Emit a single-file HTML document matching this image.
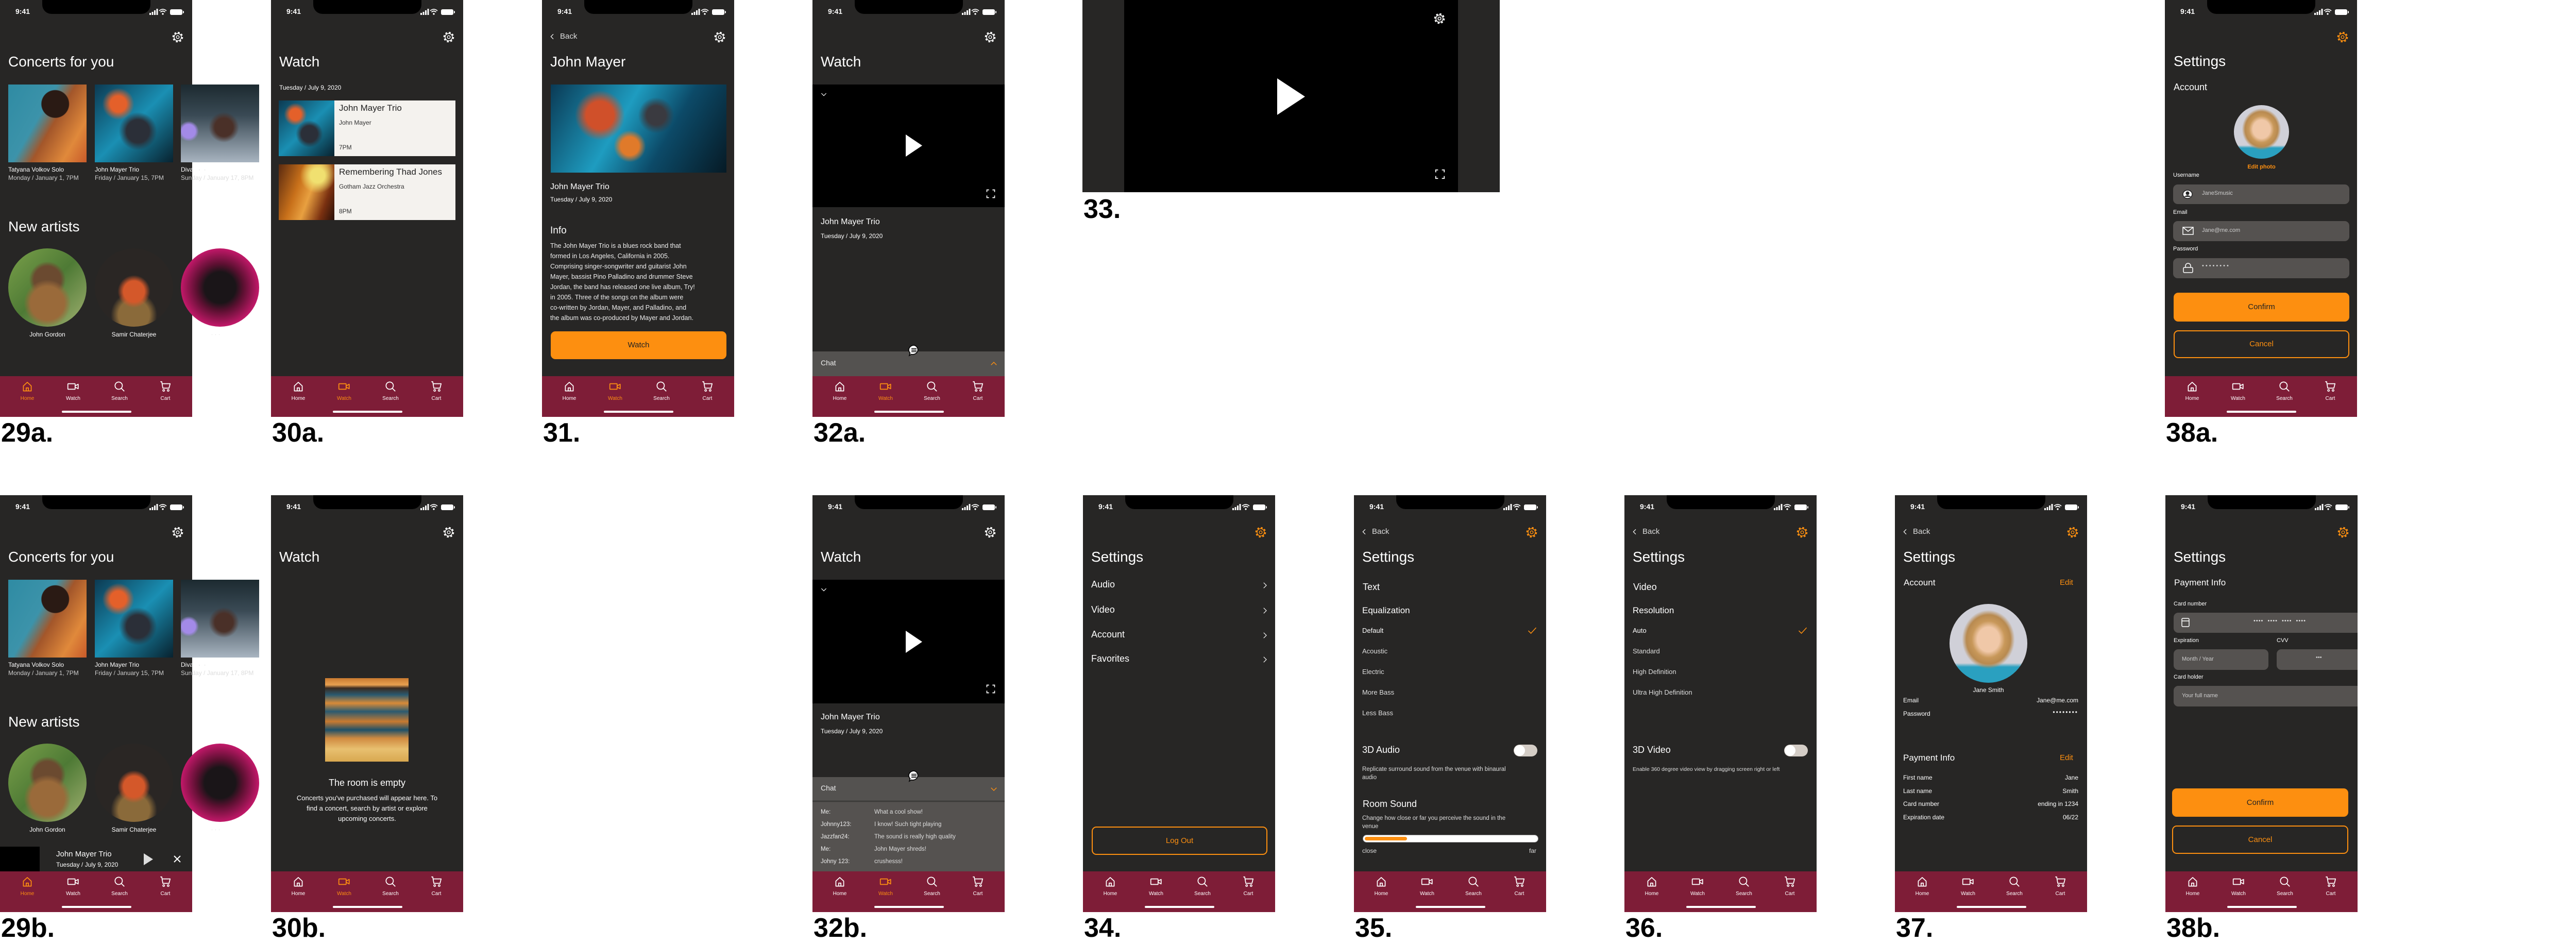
<!DOCTYPE html>
<html><head><meta charset="utf-8"><style>
*{margin:0;padding:0;box-sizing:border-box}
body{width:5102px;height:1822px;background:#fff;position:relative;overflow:hidden;font-family:"Liberation Sans",sans-serif}
.ph{position:absolute;width:373px;height:809px;background:#272625;overflow:hidden}
.ov{overflow:visible}
.t{position:absolute;white-space:nowrap;color:#fff;line-height:1.2}
.tm{position:absolute;left:30px;top:14px;color:#fff;font-weight:bold;font-size:14px}
.notch{position:absolute;left:82px;top:0;width:210px;height:27px;background:#000;border-radius:0 0 18px 18px}
.st{position:absolute;left:290px;top:16px}
.tb{position:absolute;left:0;top:730px;width:373px;height:79px;background:#7e1d37}
.ti{position:absolute;top:7px;width:70px;margin-left:-35px;text-align:center;color:#fff;font-size:10px}
.ti svg{display:block;margin:0 auto;width:26px;height:26px}
.ti span{display:block;margin-top:5px;line-height:12px}
.on{color:#fd8f10}
.hi{position:absolute;left:120px;width:135px;top:67px;height:4px;border-radius:2px;background:#fff}
.lbl{position:absolute;font-weight:bold;font-size:52px;line-height:1;color:#000}
.ic{position:absolute;color:#fff}
.h1{font-size:28px}
.sm{font-size:12px}
.btn{position:absolute;left:17px;width:341px;border-radius:9px;text-align:center;font-size:15px}
.fld{position:absolute;background:#555250;border-radius:9px}
</style></head><body>
<svg style="display:none" xmlns="http://www.w3.org/2000/svg">
<symbol id="home" viewBox="0 0 24 24"><path d="M5 11 L12 4.5 L19 11 V20 H5 Z M10 20 V14.5 H14 V20" fill="none" stroke="currentColor" stroke-width="1.6" stroke-linejoin="round"/></symbol>
<symbol id="vid" viewBox="0 0 24 24"><rect x="2.5" y="7" width="13" height="10" rx="1" fill="none" stroke="currentColor" stroke-width="1.6"/><path d="M15.5 11 L21 8 V16 L15.5 13" fill="none" stroke="currentColor" stroke-width="1.6" stroke-linejoin="round"/></symbol>
<symbol id="srch" viewBox="0 0 24 24"><circle cx="10.5" cy="10.5" r="6.5" fill="none" stroke="currentColor" stroke-width="1.6"/><path d="M15.3 15.3 L20.5 20.5" stroke="currentColor" stroke-width="1.6"/></symbol>
<symbol id="cart" viewBox="0 0 24 24"><path d="M3 3.5 H5.5 L7.5 15 H18.5 L20.5 7 H6.2" fill="none" stroke="currentColor" stroke-width="1.6" stroke-linejoin="round"/><circle cx="9" cy="19" r="1.6" fill="none" stroke="currentColor" stroke-width="1.4"/><circle cx="17" cy="19" r="1.6" fill="none" stroke="currentColor" stroke-width="1.4"/></symbol>
<symbol id="gear" viewBox="0 0 24 24"><circle cx="12" cy="12" r="8.6" fill="none" stroke="currentColor" stroke-width="3.4" stroke-dasharray="3.4 3.35"/><circle cx="12" cy="12" r="7" fill="#272625" stroke="currentColor" stroke-width="1.4"/><circle cx="12" cy="12" r="2.8" fill="none" stroke="currentColor" stroke-width="1.4"/></symbol>
<symbol id="chr" viewBox="0 0 24 24"><path d="M9 5 L16 12 L9 19" fill="none" stroke="currentColor" stroke-width="1.6"/></symbol>
<symbol id="chl" viewBox="0 0 24 24"><path d="M15 5 L8 12 L15 19" fill="none" stroke="currentColor" stroke-width="1.8"/></symbol>
<symbol id="chd" viewBox="0 0 24 24"><path d="M5 9 L12 16 L19 9" fill="none" stroke="currentColor" stroke-width="1.8"/></symbol>
<symbol id="chu" viewBox="0 0 24 24"><path d="M5 15 L12 8 L19 15" fill="none" stroke="currentColor" stroke-width="1.8"/></symbol>
<symbol id="chk" viewBox="0 0 24 24"><path d="M3 12 L9 18 L21 5" fill="none" stroke="currentColor" stroke-width="1.8"/></symbol>
<symbol id="fs" viewBox="0 0 24 24"><path d="M3 8 V3 H8 M16 3 H21 V8 M21 16 V21 H16 M8 21 H3 V16" fill="none" stroke="currentColor" stroke-width="2"/></symbol>
<symbol id="bub" viewBox="0 0 24 24"><path d="M12 2 A10 9 0 1 1 7 19.5 L3 22 L4.5 17 A10 9 0 0 1 12 2 Z" fill="#fff" stroke="#000" stroke-width="1.6"/><path d="M7 8.5 H17 M7 11.5 H17 M7 14.5 H17" stroke="#000" stroke-width="1.5"/></symbol>
<symbol id="sts" viewBox="0 0 70 14"><rect x="0" y="9" width="3" height="4" fill="#fff"/><rect x="4.5" y="7" width="3" height="6" fill="#fff"/><rect x="9" y="4" width="3" height="9" fill="#fff"/><rect x="13.5" y="1" width="3" height="12" fill="#fff"/><path d="M19 5 Q26 -1 33 5 M21.5 7.5 Q26 3.5 30.5 7.5" stroke="#fff" stroke-width="1.8" fill="none"/><circle cx="26" cy="11" r="1.7" fill="#fff"/><rect x="40" y="2" width="24" height="11" rx="3" fill="#fff"/><rect x="65" y="5.5" width="2" height="4" fill="#fff"/></symbol>
</svg>

<!-- ============ ROW 1 ============ -->
<!-- 29a -->
<div class="ph ov" style="left:0;top:0">
<div class="tm">9:41</div><div class="notch"></div><svg class="st" width="70" height="14"><use href="#sts"/></svg>
<svg class="ic" style="left:333px;top:60px" width="24" height="24"><use href="#gear"/></svg>
<div class="t h1" style="left:16px;top:103px">Concerts for you</div>
<div style="position:absolute;left:16px;top:164px;width:152px;height:151px;background:radial-gradient(circle at 60% 25%,#2a1a14 0 18%,transparent 19%),linear-gradient(120deg,#2f8ba3 0%,#3c93aa 40%,#a3562a 55%,#e0893b 80%,#c85a2a 100%)"></div>
<div style="position:absolute;left:184px;top:164px;width:152px;height:151px;background:radial-gradient(circle at 30% 25%,#e4602a 0 10%,transparent 20%),radial-gradient(circle at 55% 60%,#2b2f38 0 18%,transparent 30%),linear-gradient(135deg,#0c3a52,#1a8fb3 50%,#08222f)"></div>
<div style="position:absolute;left:351px;top:164px;width:152px;height:151px;background:radial-gradient(circle at 55% 55%,#4a3028 0 15%,transparent 25%),radial-gradient(circle at 10% 60%,#a38ae8 0 8%,transparent 12%),linear-gradient(180deg,#1c2a30 0%,#3a4a55 40%,#a8b4c0 100%)"></div>
<div class="t sm" style="left:16px;top:322px">Tatyana Volkov Solo</div><div class="t sm" style="left:16px;top:338px;color:#ccc">Monday / January 1, 7PM</div>
<div class="t sm" style="left:184px;top:322px">John Mayer Trio</div><div class="t sm" style="left:184px;top:338px;color:#ccc">Friday / January 15, 7PM</div>
<div class="t sm" style="left:351px;top:322px">Diva <span style="color:#ddd">&nbsp;&nbsp;· &nbsp;·</span></div><div class="t sm" style="left:351px;top:338px;color:#ccc">Sun<span style="color:#ddd">day / January 17, 8PM</span></div>
<div class="t h1" style="left:16px;top:423px">New artists</div>
<div style="position:absolute;left:16px;top:482px;width:152px;height:152px;border-radius:50%;background:radial-gradient(circle at 50% 70%,#9a6a3a 0 25%,transparent 35%),radial-gradient(circle at 50% 40%,#6b4a30 0 22%,transparent 30%),linear-gradient(135deg,#7aa04a,#4e7a35 50%,#a0b070)"></div>
<div style="position:absolute;left:184px;top:482px;width:152px;height:152px;border-radius:50%;background:radial-gradient(circle at 50% 55%,#d4582a 0 18%,transparent 28%),radial-gradient(circle at 50% 85%,#8a6a3a 0 20%,transparent 30%),#2a2624"></div>
<div style="position:absolute;left:351px;top:482px;width:152px;height:152px;border-radius:50%;background:radial-gradient(circle at 50% 50%,#1a1518 0 28%,#5a1030 42%,#c01868 70%,#d6307a 100%)"></div>
<div class="t sm" style="left:16px;width:152px;text-align:center;top:642px">John Gordon</div>
<div class="t sm" style="left:184px;width:152px;text-align:center;top:642px">Samir Chaterjee</div>
<div class="t" style="left:410px;top:645px;color:#ccc;font-size:8px">·&nbsp;&nbsp;·&nbsp;&nbsp;·</div>
<div class="tb"><div class="ti on" style="left:53px"><svg><use href="#home"/></svg><span>Home</span></div><div class="ti" style="left:142px"><svg><use href="#vid"/></svg><span>Watch</span></div><div class="ti" style="left:232px"><svg><use href="#srch"/></svg><span>Search</span></div><div class="ti" style="left:321px"><svg><use href="#cart"/></svg><span>Cart</span></div><div class="hi"></div></div>
</div>
<div class="lbl" style="left:2px;top:814px">29a.</div>

<!-- 30a -->
<div class="ph" style="left:526px;top:0">
<div class="tm">9:41</div><div class="notch"></div><svg class="st" width="70" height="14"><use href="#sts"/></svg>
<svg class="ic" style="left:333px;top:60px" width="24" height="24"><use href="#gear"/></svg>
<div class="t h1" style="left:16px;top:103px">Watch</div>
<div class="t sm" style="left:16px;top:163px">Tuesday / July 9, 2020</div>
<div style="position:absolute;left:15px;top:195px;width:343px;height:108px;background:#f4f2ee"></div>
<div style="position:absolute;left:15px;top:195px;width:108px;height:108px;background:radial-gradient(circle at 30% 25%,#e4602a 0 10%,transparent 20%),radial-gradient(circle at 55% 60%,#2b2f38 0 18%,transparent 30%),linear-gradient(135deg,#0c3a52,#1a8fb3 50%,#08222f)"></div>
<div class="t" style="left:132px;top:200px;color:#222;font-size:17px">John Mayer Trio</div>
<div class="t sm" style="left:132px;top:231px;color:#333">John Mayer</div>
<div class="t sm" style="left:132px;top:279px;color:#333">7PM</div>
<div style="position:absolute;left:15px;top:319px;width:343px;height:108px;background:#f4f2ee"></div>
<div style="position:absolute;left:15px;top:319px;width:108px;height:108px;background:radial-gradient(circle at 70% 20%,#f0e070 0 12%,transparent 30%),linear-gradient(110deg,#5a2a10,#c8701a 35%,#e8a040 55%,#7a3010 80%,#2a1008)"></div>
<div class="t" style="left:132px;top:324px;color:#222;font-size:17px">Remembering Thad Jones</div>
<div class="t sm" style="left:132px;top:355px;color:#333">Gotham Jazz Orchestra</div>
<div class="t sm" style="left:132px;top:403px;color:#333">8PM</div>
<div class="tb"><div class="ti" style="left:53px"><svg><use href="#home"/></svg><span>Home</span></div><div class="ti on" style="left:142px"><svg><use href="#vid"/></svg><span>Watch</span></div><div class="ti" style="left:232px"><svg><use href="#srch"/></svg><span>Search</span></div><div class="ti" style="left:321px"><svg><use href="#cart"/></svg><span>Cart</span></div><div class="hi"></div></div>
</div>
<div class="lbl" style="left:528px;top:814px">30a.</div>

<!-- 31 -->
<div class="ph" style="left:1052px;top:0">
<div class="tm">9:41</div><div class="notch"></div><svg class="st" width="70" height="14"><use href="#sts"/></svg>
<svg class="ic" style="left:12px;top:63px" width="16" height="16"><use href="#chl"/></svg>
<div class="t" style="left:35px;top:62px;font-size:15px;color:#ddd">Back</div>
<svg class="ic" style="left:333px;top:60px" width="24" height="24"><use href="#gear"/></svg>
<div class="t h1" style="left:16px;top:103px">John Mayer</div>
<div style="position:absolute;left:17px;top:164px;width:341px;height:171px;background:radial-gradient(circle at 60% 35%,#3a3a40 0 8%,transparent 15%),radial-gradient(circle at 45% 70%,#e07a2a 0 8%,transparent 14%),radial-gradient(circle at 28% 35%,#d0502a 0 10%,transparent 18%),linear-gradient(120deg,#0a3a55,#1e9cc0 40%,#0c4a68 65%,#061a25)"></div>
<div class="t" style="left:16px;top:353px;font-size:16px">John Mayer Trio</div>
<div class="t sm" style="left:16px;top:380px">Tuesday / July 9, 2020</div>
<div class="t" style="left:16px;top:437px;font-size:19px">Info</div>
<div class="t" style="left:16px;top:467px;font-size:12.5px;line-height:20px;color:#eee">The John Mayer Trio is a blues rock band that<br>formed in Los Angeles, California in 2005.<br>Comprising singer-songwriter and guitarist John<br>Mayer, bassist Pino Palladino and drummer Steve<br>Jordan, the band has released one live album, Try!<br>in 2005. Three of the songs on the album were<br>co-written by Jordan, Mayer, and Palladino, and<br>the album was co-produced by Mayer and Jordan.</div>
<div class="btn" style="top:643px;height:54px;line-height:54px;background:#fd8f10;color:#222">Watch</div>
<div class="tb"><div class="ti" style="left:53px"><svg><use href="#home"/></svg><span>Home</span></div><div class="ti on" style="left:142px"><svg><use href="#vid"/></svg><span>Watch</span></div><div class="ti" style="left:232px"><svg><use href="#srch"/></svg><span>Search</span></div><div class="ti" style="left:321px"><svg><use href="#cart"/></svg><span>Cart</span></div><div class="hi"></div></div>
</div>
<div class="lbl" style="left:1054px;top:814px">31.</div>

<!-- 32a -->
<div class="ph" style="left:1577px;top:0">
<div class="tm">9:41</div><div class="notch"></div><svg class="st" width="70" height="14"><use href="#sts"/></svg>
<svg class="ic" style="left:333px;top:60px" width="24" height="24"><use href="#gear"/></svg>
<div class="t h1" style="left:16px;top:103px">Watch</div>
<div style="position:absolute;left:0;top:164px;width:373px;height:238px;background:#000"></div>
<svg class="ic" style="left:14px;top:175px" width="16" height="16"><use href="#chd"/></svg>
<svg style="position:absolute;left:181px;top:261px" width="32" height="43"><path d="M0 0 L32 21.5 L0 43 Z" fill="#fff"/></svg>
<svg class="ic" style="left:336px;top:366px" width="20" height="20"><use href="#fs"/></svg>
<div class="t" style="left:16px;top:421px;font-size:16px">John Mayer Trio</div>
<div class="t sm" style="left:16px;top:451px">Tuesday / July 9, 2020</div>
<div style="position:absolute;left:0;top:682px;width:373px;height:48px;background:#545250"></div>
<div class="t" style="left:16px;top:696px;font-size:14px;color:#eee">Chat</div>
<svg class="ic" style="left:343px;top:697px;color:#fd8f10" width="18" height="18"><use href="#chu"/></svg>
<svg style="position:absolute;left:185px;top:668px" width="24" height="24"><use href="#bub"/></svg>
<div class="tb"><div class="ti" style="left:53px"><svg><use href="#home"/></svg><span>Home</span></div><div class="ti on" style="left:142px"><svg><use href="#vid"/></svg><span>Watch</span></div><div class="ti" style="left:232px"><svg><use href="#srch"/></svg><span>Search</span></div><div class="ti" style="left:321px"><svg><use href="#cart"/></svg><span>Cart</span></div><div class="hi"></div></div>
</div>
<div class="lbl" style="left:1579px;top:814px">32a.</div>

<!-- 33 landscape -->
<div style="position:absolute;left:2101px;top:0;width:810px;height:373px;background:#272625">
<div style="position:absolute;left:81px;top:0;width:648px;height:373px;background:#000"></div>
<svg class="ic" style="left:681px;top:24px;color:#fff" width="24" height="24"><use href="#gear"/></svg>
<svg style="position:absolute;left:378px;top:152px" width="54" height="71"><path d="M0 0 L54 35.5 L0 71 Z" fill="#fff"/></svg>
<svg class="ic" style="left:683px;top:327px" width="22" height="22"><use href="#fs"/></svg>
</div>
<div class="lbl" style="left:2103px;top:380px">33.</div>

<!-- 38a -->
<div class="ph" style="left:4202px;top:0">
<div class="tm">9:41</div><div class="notch"></div><svg class="st" width="70" height="14"><use href="#sts"/></svg>
<svg class="ic" style="left:333px;top:60px;color:#fd8f10" width="24" height="24"><use href="#gear"/></svg>
<div class="t h1" style="left:17px;top:102px">Settings</div>
<div class="t" style="left:17px;top:159px;font-size:18px">Account</div>
<div style="position:absolute;left:134px;top:204px;width:107px;height:104px;border-radius:50%;background:radial-gradient(ellipse at 50% 45%,#f0c8a8 0 22%,#c8985a 32%,#b88a50 42%,transparent 50%),linear-gradient(180deg,#d0d0d8 0 75%,#2aa0c0 80%)"></div>
<div class="t" style="left:134px;width:107px;text-align:center;top:318px;font-size:11px;color:#fd8f10;font-weight:bold">Edit photo</div>
<div class="t" style="left:16px;top:334px;font-size:11px">Username</div>
<div class="fld" style="left:16px;top:358px;width:342px;height:38px"></div>
<svg style="position:absolute;left:34px;top:368px" width="20" height="18"><ellipse cx="10" cy="9" rx="9" ry="8" fill="#fff" stroke="#222" stroke-width="1.5"/><circle cx="10" cy="7" r="3.5" fill="#222"/><path d="M3 14 Q10 8 17 14" fill="#222"/></svg>
<div class="t" style="left:72px;top:369px;font-size:11px;color:#ccc">JaneSmusic</div>
<div class="t" style="left:16px;top:406px;font-size:11px">Email</div>
<div class="fld" style="left:16px;top:429px;width:342px;height:39px"></div>
<svg style="position:absolute;left:34px;top:440px" width="22" height="16"><rect x="1" y="1" width="20" height="14" fill="none" stroke="#fff" stroke-width="1.5"/><path d="M1 1 L11 9 L21 1" fill="none" stroke="#fff" stroke-width="1.5"/></svg>
<div class="t" style="left:72px;top:441px;font-size:11px;color:#ccc">Jane@me.com</div>
<div class="t" style="left:16px;top:477px;font-size:11px">Password</div>
<div class="fld" style="left:16px;top:501px;width:342px;height:39px"></div>
<svg style="position:absolute;left:34px;top:510px" width="22" height="20"><path d="M6 9 V6 A5 5 0 0 1 16 6 V9" fill="none" stroke="#fff" stroke-width="1.5"/><rect x="2" y="9" width="18" height="10" rx="2" fill="none" stroke="#fff" stroke-width="1.5"/></svg>
<div class="t" style="left:72px;top:510px;font-size:11px;color:#ccc;letter-spacing:3px">••••••••</div>
<div class="btn" style="top:568px;height:56px;line-height:56px;background:#fd8f10;color:#222">Confirm</div>
<div class="btn" style="top:641px;height:54px;line-height:50px;border:2px solid #fd8f10;color:#fd8f10">Cancel</div>
<div class="tb"><div class="ti" style="left:53px"><svg><use href="#home"/></svg><span>Home</span></div><div class="ti" style="left:142px"><svg><use href="#vid"/></svg><span>Watch</span></div><div class="ti" style="left:232px"><svg><use href="#srch"/></svg><span>Search</span></div><div class="ti" style="left:321px"><svg><use href="#cart"/></svg><span>Cart</span></div><div class="hi"></div></div>
</div>
<div class="lbl" style="left:4204px;top:814px">38a.</div>

<!-- ============ ROW 2 ============ -->
<!-- 29b -->
<div class="ph ov" style="left:0;top:961px">
<div class="tm">9:41</div><div class="notch"></div><svg class="st" width="70" height="14"><use href="#sts"/></svg>
<svg class="ic" style="left:333px;top:60px" width="24" height="24"><use href="#gear"/></svg>
<div class="t h1" style="left:16px;top:103px">Concerts for you</div>
<div style="position:absolute;left:16px;top:164px;width:152px;height:151px;background:radial-gradient(circle at 60% 25%,#2a1a14 0 18%,transparent 19%),linear-gradient(120deg,#2f8ba3 0%,#3c93aa 40%,#a3562a 55%,#e0893b 80%,#c85a2a 100%)"></div>
<div style="position:absolute;left:184px;top:164px;width:152px;height:151px;background:radial-gradient(circle at 30% 25%,#e4602a 0 10%,transparent 20%),radial-gradient(circle at 55% 60%,#2b2f38 0 18%,transparent 30%),linear-gradient(135deg,#0c3a52,#1a8fb3 50%,#08222f)"></div>
<div style="position:absolute;left:351px;top:164px;width:152px;height:151px;background:radial-gradient(circle at 55% 55%,#4a3028 0 15%,transparent 25%),radial-gradient(circle at 10% 60%,#a38ae8 0 8%,transparent 12%),linear-gradient(180deg,#1c2a30 0%,#3a4a55 40%,#a8b4c0 100%)"></div>
<div class="t sm" style="left:16px;top:322px">Tatyana Volkov Solo</div><div class="t sm" style="left:16px;top:338px;color:#ccc">Monday / January 1, 7PM</div>
<div class="t sm" style="left:184px;top:322px">John Mayer Trio</div><div class="t sm" style="left:184px;top:338px;color:#ccc">Friday / January 15, 7PM</div>
<div class="t sm" style="left:351px;top:322px">Diva <span style="color:#ddd">&nbsp;&nbsp;· &nbsp;·</span></div><div class="t sm" style="left:351px;top:338px;color:#ccc">Sun<span style="color:#ddd">day / January 17, 8PM</span></div>
<div class="t h1" style="left:16px;top:423px">New artists</div>
<div style="position:absolute;left:16px;top:482px;width:152px;height:152px;border-radius:50%;background:radial-gradient(circle at 50% 70%,#9a6a3a 0 25%,transparent 35%),radial-gradient(circle at 50% 40%,#6b4a30 0 22%,transparent 30%),linear-gradient(135deg,#7aa04a,#4e7a35 50%,#a0b070)"></div>
<div style="position:absolute;left:184px;top:482px;width:152px;height:152px;border-radius:50%;background:radial-gradient(circle at 50% 55%,#d4582a 0 18%,transparent 28%),radial-gradient(circle at 50% 85%,#8a6a3a 0 20%,transparent 30%),#2a2624"></div>
<div style="position:absolute;left:351px;top:482px;width:152px;height:152px;border-radius:50%;background:radial-gradient(circle at 50% 50%,#1a1518 0 28%,#5a1030 42%,#c01868 70%,#d6307a 100%)"></div>
<div class="t sm" style="left:16px;width:152px;text-align:center;top:642px">John Gordon</div>
<div class="t sm" style="left:184px;width:152px;text-align:center;top:642px">Samir Chaterjee</div>
<div class="t" style="left:410px;top:645px;color:#ccc;font-size:8px">·&nbsp;&nbsp;·&nbsp;&nbsp;·</div>
<div style="position:absolute;left:0;top:682px;width:373px;height:48px;background:#272625"></div>
<div style="position:absolute;left:0;top:682px;width:77px;height:48px;background:#000"></div>
<div class="t" style="left:109px;top:688px;font-size:15px">John Mayer Trio</div>
<div class="t sm" style="left:109px;top:710px">Tuesday / July 9, 2020</div>
<svg style="position:absolute;left:279px;top:695px" width="18" height="23"><path d="M0 0 L18 11.5 L0 23 Z" fill="#ddd"/></svg>
<svg style="position:absolute;left:337px;top:699px" width="14" height="14"><path d="M1 1 L13 13 M13 1 L1 13" stroke="#fff" stroke-width="2"/></svg>
<div class="tb"><div class="ti on" style="left:53px"><svg><use href="#home"/></svg><span>Home</span></div><div class="ti" style="left:142px"><svg><use href="#vid"/></svg><span>Watch</span></div><div class="ti" style="left:232px"><svg><use href="#srch"/></svg><span>Search</span></div><div class="ti" style="left:321px"><svg><use href="#cart"/></svg><span>Cart</span></div><div class="hi"></div></div>
</div>
<div class="lbl" style="left:2px;top:1775px">29b.</div>

<!-- 30b -->
<div class="ph" style="left:526px;top:961px">
<div class="tm">9:41</div><div class="notch"></div><svg class="st" width="70" height="14"><use href="#sts"/></svg>
<svg class="ic" style="left:333px;top:60px" width="24" height="24"><use href="#gear"/></svg>
<div class="t h1" style="left:16px;top:103px">Watch</div>
<div style="position:absolute;left:105px;top:355px;width:162px;height:162px;background:linear-gradient(180deg,#c87a30 0%,#e8a050 8%,#3a2a20 12%,#2a5a70 20%,#d88a38 30%,#2a5a70 40%,#c87a30 52%,#1e5068 62%,#d08a40 72%,#e8c070 85%,#d8a850 100%)"></div>
<div class="t" style="left:0;width:373px;text-align:center;top:548px;font-size:18px">The room is empty</div>
<div class="t" style="left:0;width:373px;text-align:center;top:578px;font-size:13px;line-height:20px">Concerts you've purchased will appear here. To<br>find a concert, search by artist or explore<br>upcoming concerts.</div>
<div class="tb"><div class="ti" style="left:53px"><svg><use href="#home"/></svg><span>Home</span></div><div class="ti on" style="left:142px"><svg><use href="#vid"/></svg><span>Watch</span></div><div class="ti" style="left:232px"><svg><use href="#srch"/></svg><span>Search</span></div><div class="ti" style="left:321px"><svg><use href="#cart"/></svg><span>Cart</span></div><div class="hi"></div></div>
</div>
<div class="lbl" style="left:528px;top:1775px">30b.</div>

<!-- 32b -->
<div class="ph" style="left:1577px;top:961px">
<div class="tm">9:41</div><div class="notch"></div><svg class="st" width="70" height="14"><use href="#sts"/></svg>
<svg class="ic" style="left:333px;top:60px" width="24" height="24"><use href="#gear"/></svg>
<div class="t h1" style="left:16px;top:103px">Watch</div>
<div style="position:absolute;left:0;top:164px;width:373px;height:240px;background:#000"></div>
<svg class="ic" style="left:14px;top:175px" width="16" height="16"><use href="#chd"/></svg>
<svg style="position:absolute;left:181px;top:263px" width="32" height="43"><path d="M0 0 L32 21.5 L0 43 Z" fill="#fff"/></svg>
<svg class="ic" style="left:336px;top:366px" width="20" height="20"><use href="#fs"/></svg>
<div class="t" style="left:16px;top:421px;font-size:16px">John Mayer Trio</div>
<div class="t sm" style="left:16px;top:451px">Tuesday / July 9, 2020</div>
<div style="position:absolute;left:0;top:547px;width:373px;height:46px;background:#545250"></div>
<div class="t" style="left:16px;top:560px;font-size:14px;color:#eee">Chat</div>
<svg class="ic" style="left:343px;top:561px;color:#fd8f10" width="18" height="18"><use href="#chd"/></svg>
<svg style="position:absolute;left:185px;top:533px" width="24" height="24"><use href="#bub"/></svg>
<div style="position:absolute;left:0;top:594px;width:373px;height:136px;background:#555250;border-top:2px solid #4a4846"></div>
<div class="t" style="left:16px;top:603px;font-size:11.5px;line-height:24px;color:#eee">Me:<br>Johnny123:<br>Jazzfan24:<br>Me:<br>Johny 123:<br>username:</div>
<div class="t" style="left:120px;top:603px;font-size:11.5px;line-height:24px;color:#ddd">What a cool show!<br>I know! Such tight playing<br>The sound is really high quality<br>John Mayer shreds!<br>crushesss!<br>some text</div>
<div class="tb"><div class="ti" style="left:53px"><svg><use href="#home"/></svg><span>Home</span></div><div class="ti on" style="left:142px"><svg><use href="#vid"/></svg><span>Watch</span></div><div class="ti" style="left:232px"><svg><use href="#srch"/></svg><span>Search</span></div><div class="ti" style="left:321px"><svg><use href="#cart"/></svg><span>Cart</span></div><div class="hi"></div></div>
</div>
<div class="lbl" style="left:1579px;top:1775px">32b.</div>

<!-- 34 -->
<div class="ph" style="left:2102px;top:961px">
<div class="tm">9:41</div><div class="notch"></div><svg class="st" width="70" height="14"><use href="#sts"/></svg>
<svg class="ic" style="left:333px;top:60px;color:#fd8f10" width="24" height="24"><use href="#gear"/></svg>
<div class="t h1" style="left:16px;top:103px">Settings</div>
<div class="t" style="left:16px;top:163px;font-size:18px">Audio</div><svg class="ic" style="left:344px;top:166px" width="18" height="18"><use href="#chr"/></svg>
<div class="t" style="left:16px;top:212px;font-size:18px">Video</div><svg class="ic" style="left:344px;top:215px" width="18" height="18"><use href="#chr"/></svg>
<div class="t" style="left:16px;top:260px;font-size:18px">Account</div><svg class="ic" style="left:344px;top:263px" width="18" height="18"><use href="#chr"/></svg>
<div class="t" style="left:16px;top:307px;font-size:18px">Favorites</div><svg class="ic" style="left:344px;top:310px" width="18" height="18"><use href="#chr"/></svg>
<div class="btn" style="top:643px;height:55px;line-height:51px;border:2px solid #fd8f10;color:#fd8f10">Log Out</div>
<div class="tb"><div class="ti" style="left:53px"><svg><use href="#home"/></svg><span>Home</span></div><div class="ti" style="left:142px"><svg><use href="#vid"/></svg><span>Watch</span></div><div class="ti" style="left:232px"><svg><use href="#srch"/></svg><span>Search</span></div><div class="ti" style="left:321px"><svg><use href="#cart"/></svg><span>Cart</span></div><div class="hi"></div></div>
</div>
<div class="lbl" style="left:2104px;top:1775px">34.</div>

<!-- 35 -->
<div class="ph" style="left:2628px;top:961px">
<div class="tm">9:41</div><div class="notch"></div><svg class="st" width="70" height="14"><use href="#sts"/></svg>
<svg class="ic" style="left:12px;top:63px" width="16" height="16"><use href="#chl"/></svg>
<div class="t" style="left:35px;top:62px;font-size:15px;color:#ddd">Back</div>
<svg class="ic" style="left:333px;top:60px;color:#fd8f10" width="24" height="24"><use href="#gear"/></svg>
<div class="t h1" style="left:16px;top:103px">Settings</div>
<div class="t" style="left:17px;top:168px;font-size:18px">Text</div>
<div class="t" style="left:16px;top:214px;font-size:17px">Equalization</div>
<div class="t" style="left:16px;top:255px;font-size:13px">Default</div><svg class="ic" style="left:336px;top:253px;color:#fd8f10" width="20" height="20"><use href="#chk"/></svg>
<div class="t" style="left:16px;top:295px;font-size:13px;color:#ddd">Acoustic</div>
<div class="t" style="left:16px;top:335px;font-size:13px;color:#ddd">Electric</div>
<div class="t" style="left:16px;top:375px;font-size:13px;color:#ddd">More Bass</div>
<div class="t" style="left:16px;top:415px;font-size:13px;color:#ddd">Less Bass</div>
<div class="t" style="left:16px;top:484px;font-size:18px">3D Audio</div>
<div style="position:absolute;left:310px;top:484px;width:46px;height:23px;border-radius:12px;background:#d4cdc6"></div><div style="position:absolute;left:311px;top:485px;width:21px;height:21px;border-radius:50%;background:#fff"></div>
<div class="t" style="left:16px;top:524px;font-size:11.5px;line-height:16px;color:#ddd">Replicate surround sound from the venue with binaural<br>audio</div>
<div class="t" style="left:17px;top:589px;font-size:18px">Room Sound</div>
<div class="t" style="left:16px;top:619px;font-size:11.5px;line-height:16px;color:#ddd">Change how close or far you perceive the sound in the<br>venue</div>
<div style="position:absolute;left:17px;top:659px;width:341px;height:15px;border-radius:8px;background:#fff;border:1px solid #999"></div>
<div style="position:absolute;left:21px;top:663px;width:82px;height:7px;border-radius:4px;background:#fd8f10"></div>
<div class="t sm" style="left:16px;top:683px;color:#ddd">close</div><div class="t sm" style="left:340px;top:683px;color:#ddd">far</div>
<div class="tb"><div class="ti" style="left:53px"><svg><use href="#home"/></svg><span>Home</span></div><div class="ti" style="left:142px"><svg><use href="#vid"/></svg><span>Watch</span></div><div class="ti" style="left:232px"><svg><use href="#srch"/></svg><span>Search</span></div><div class="ti" style="left:321px"><svg><use href="#cart"/></svg><span>Cart</span></div><div class="hi"></div></div>
</div>
<div class="lbl" style="left:2630px;top:1775px">35.</div>

<!-- 36 -->
<div class="ph" style="left:3153px;top:961px">
<div class="tm">9:41</div><div class="notch"></div><svg class="st" width="70" height="14"><use href="#sts"/></svg>
<svg class="ic" style="left:12px;top:63px" width="16" height="16"><use href="#chl"/></svg>
<div class="t" style="left:35px;top:62px;font-size:15px;color:#ddd">Back</div>
<svg class="ic" style="left:333px;top:60px;color:#fd8f10" width="24" height="24"><use href="#gear"/></svg>
<div class="t h1" style="left:16px;top:103px">Settings</div>
<div class="t" style="left:17px;top:168px;font-size:18px">Video</div>
<div class="t" style="left:16px;top:214px;font-size:17px">Resolution</div>
<div class="t" style="left:16px;top:255px;font-size:13px">Auto</div><svg class="ic" style="left:336px;top:253px;color:#fd8f10" width="20" height="20"><use href="#chk"/></svg>
<div class="t" style="left:16px;top:295px;font-size:13px;color:#ddd">Standard</div>
<div class="t" style="left:16px;top:335px;font-size:13px;color:#ddd">High Definition</div>
<div class="t" style="left:16px;top:375px;font-size:13px;color:#ddd">Ultra High Definition</div>
<div class="t" style="left:16px;top:484px;font-size:18px">3D Video</div>
<div style="position:absolute;left:310px;top:484px;width:46px;height:23px;border-radius:12px;background:#d4cdc6"></div><div style="position:absolute;left:311px;top:485px;width:21px;height:21px;border-radius:50%;background:#fff"></div>
<div class="t" style="left:16px;top:526px;font-size:10.5px;color:#ddd">Enable 360 degree video view by dragging screen right or left</div>
<div class="tb"><div class="ti" style="left:53px"><svg><use href="#home"/></svg><span>Home</span></div><div class="ti" style="left:142px"><svg><use href="#vid"/></svg><span>Watch</span></div><div class="ti" style="left:232px"><svg><use href="#srch"/></svg><span>Search</span></div><div class="ti" style="left:321px"><svg><use href="#cart"/></svg><span>Cart</span></div><div class="hi"></div></div>
</div>
<div class="lbl" style="left:3155px;top:1775px">36.</div>

<!-- 37 -->
<div class="ph" style="left:3678px;top:961px">
<div class="tm">9:41</div><div class="notch"></div><svg class="st" width="70" height="14"><use href="#sts"/></svg>
<svg class="ic" style="left:12px;top:63px" width="16" height="16"><use href="#chl"/></svg>
<div class="t" style="left:35px;top:62px;font-size:15px;color:#ddd">Back</div>
<svg class="ic" style="left:333px;top:60px;color:#fd8f10" width="24" height="24"><use href="#gear"/></svg>
<div class="t h1" style="left:16px;top:103px">Settings</div>
<div class="t" style="left:17px;top:160px;font-size:17px">Account</div>
<div class="t" style="left:320px;top:161px;font-size:15px;color:#fd8f10">Edit</div>
<div style="position:absolute;left:106px;top:211px;width:151px;height:153px;border-radius:50%;background:radial-gradient(ellipse at 50% 45%,#f0c8a8 0 20%,#c8985a 30%,#b88a50 40%,transparent 48%),linear-gradient(180deg,#d0d0d8 0 75%,#2aa0c0 80%)"></div>
<div class="t sm" style="left:106px;width:151px;text-align:center;top:371px">Jane Smith</div>
<div class="t sm" style="left:16px;top:391px">Email</div><div class="t sm" style="left:200px;width:156px;text-align:right;top:391px">Jane@me.com</div>
<div class="t sm" style="left:16px;top:417px">Password</div><div class="t sm" style="left:200px;width:156px;text-align:right;top:414px;letter-spacing:2px">••••••••</div>
<div class="t" style="left:16px;top:500px;font-size:17px">Payment Info</div>
<div class="t" style="left:320px;top:501px;font-size:15px;color:#fd8f10">Edit</div>
<div class="t sm" style="left:16px;top:541px">First name</div><div class="t sm" style="left:200px;width:156px;text-align:right;top:541px">Jane</div>
<div class="t sm" style="left:16px;top:567px">Last name</div><div class="t sm" style="left:200px;width:156px;text-align:right;top:567px">Smith</div>
<div class="t sm" style="left:16px;top:592px">Card number</div><div class="t sm" style="left:200px;width:156px;text-align:right;top:592px">ending in 1234</div>
<div class="t sm" style="left:16px;top:618px">Expiration date</div><div class="t sm" style="left:200px;width:156px;text-align:right;top:618px">06/22</div>
<div class="tb"><div class="ti" style="left:53px"><svg><use href="#home"/></svg><span>Home</span></div><div class="ti" style="left:142px"><svg><use href="#vid"/></svg><span>Watch</span></div><div class="ti" style="left:232px"><svg><use href="#srch"/></svg><span>Search</span></div><div class="ti" style="left:321px"><svg><use href="#cart"/></svg><span>Cart</span></div><div class="hi"></div></div>
</div>
<div class="lbl" style="left:3680px;top:1775px">37.</div>

<!-- 38b -->
<div class="ph" style="left:4203px;top:961px">
<div class="tm">9:41</div><div class="notch"></div><svg class="st" width="70" height="14"><use href="#sts"/></svg>
<svg class="ic" style="left:333px;top:60px;color:#fd8f10" width="24" height="24"><use href="#gear"/></svg>
<div class="t h1" style="left:16px;top:103px">Settings</div>
<div class="t" style="left:17px;top:160px;font-size:17px">Payment Info</div>
<div class="t" style="left:16px;top:205px;font-size:11px">Card number</div>
<div class="fld" style="left:16px;top:228px;width:370px;height:39px"></div>
<svg style="position:absolute;left:31px;top:238px" width="16" height="18"><rect x="1" y="1" width="14" height="16" rx="2" fill="none" stroke="#fff" stroke-width="1.5"/><path d="M1 6 H15" stroke="#fff" stroke-width="1.5"/></svg>
<div class="t" style="left:171px;top:238px;font-size:11px;color:#ddd;letter-spacing:1px">•••• &nbsp;•••• &nbsp;•••• &nbsp;••••</div>
<div class="t" style="left:16px;top:276px;font-size:11px">Expiration</div>
<div class="t" style="left:216px;top:276px;font-size:11px">CVV</div>
<div class="fld" style="left:16px;top:299px;width:184px;height:40px"></div>
<div class="t" style="left:32px;top:312px;font-size:11px;color:#ccc">Month / Year</div>
<div class="fld" style="left:216px;top:299px;width:170px;height:40px"></div>
<div class="t" style="left:292px;top:309px;font-size:11px;color:#ccc">•••</div>
<div class="t" style="left:16px;top:347px;font-size:11px">Card holder</div>
<div class="fld" style="left:16px;top:370px;width:370px;height:40px"></div>
<div class="t" style="left:32px;top:383px;font-size:11px;color:#ccc">Your full name</div>
<div class="btn" style="left:13px;width:342px;top:569px;height:55px;line-height:55px;background:#fd8f10;color:#222">Confirm</div>
<div class="btn" style="left:13px;width:342px;top:641px;height:55px;line-height:51px;border:2px solid #fd8f10;color:#fd8f10">Cancel</div>
<div class="tb"><div class="ti" style="left:53px"><svg><use href="#home"/></svg><span>Home</span></div><div class="ti" style="left:142px"><svg><use href="#vid"/></svg><span>Watch</span></div><div class="ti" style="left:232px"><svg><use href="#srch"/></svg><span>Search</span></div><div class="ti" style="left:321px"><svg><use href="#cart"/></svg><span>Cart</span></div><div class="hi"></div></div>
</div>
<div class="lbl" style="left:4205px;top:1775px">38b.</div>

</body></html>
